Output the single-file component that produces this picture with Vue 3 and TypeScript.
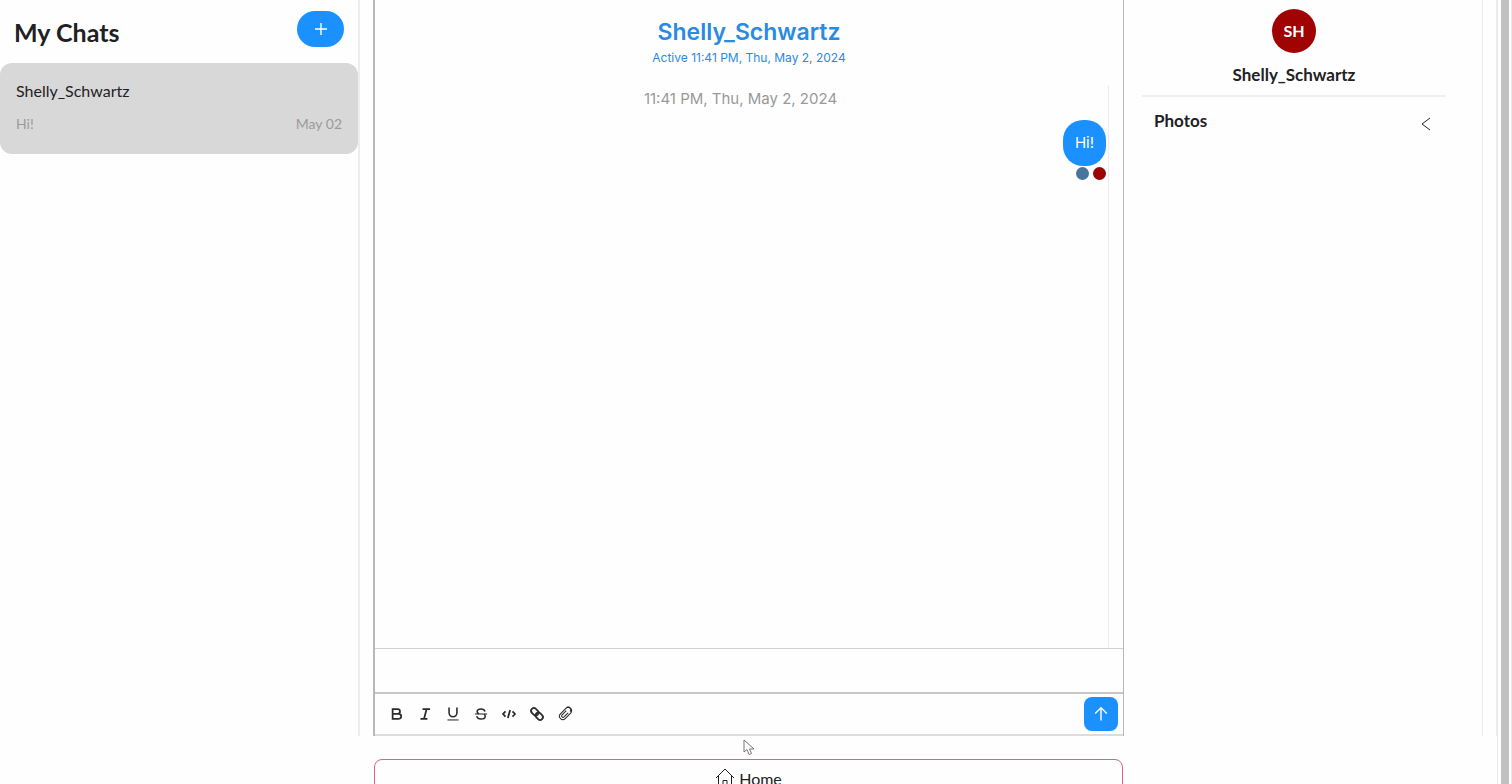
<script setup lang="ts">
import { ref } from 'vue'

interface Chat {
  name: string
  preview: string
  date: string
}

const chats: Chat[] = [{ name: 'Shelly_Schwartz', preview: 'Hi!', date: 'May 02' }]
const draft = ref('')
const photosOpen = ref(false)
</script>

<template>
  <div class="page">
    <div class="content">
      <main class="workspace">
        <aside class="chats">
          <header class="chats-head">
            <h1>My Chats</h1>
            <button class="new-chat" type="button" aria-label="New chat">
              <svg width="14" height="14" viewBox="0 0 14 14"><path d="M7 1v12M1 7h12" /></svg>
            </button>
          </header>
          <button v-for="chat in chats" :key="chat.name" class="chat-card" type="button">
            <span class="chat-name">{{ chat.name }}</span>
            <span class="chat-meta">
              <span>{{ chat.preview }}</span>
              <span>{{ chat.date }}</span>
            </span>
          </button>
        </aside>

        <section class="conversation">
          <header class="conv-head">
            <h2>Shelly_Schwartz</h2>
            <p>Active 11:41 PM, Thu, May 2, 2024</p>
          </header>
          <div class="feed">
            <time class="stamp">11:41 PM, Thu, May 2, 2024</time>
            <div class="bubble">Hi!</div>
            <div class="receipts">
              <span class="dot dot-blue"></span>
              <span class="dot dot-red"></span>
            </div>
          </div>
          <form class="composer" @submit.prevent="draft = ''">
            <textarea v-model="draft" aria-label="Message"></textarea>
            <div class="toolbar">
              <div class="tools">
                <button type="button" aria-label="Bold">
                  <svg viewBox="0 0 16 16"><path class="bold" d="M3 2.500h5.700a2.700 2.700 0 0 1 0 5.400H3zM3 7.900h7a2.800 2.800 0 0 1 0 5.600H3z" /></svg>
                </button>
                <button type="button" aria-label="Italic">
                  <svg viewBox="0 0 16 16"><path class="bold" d="M5.200 2.500h8.600M2.800 13.500h8M9.800 2.500l-2.900 11" /></svg>
                </button>
                <button type="button" aria-label="Underline">
                  <svg viewBox="0 0 16 16"><path class="medium" d="M3.500 .5v6.200a4.500 4.500 0 0 0 9 0V.5" /><path class="thin" d="M1.700 14.800h12.600" /></svg>
                </button>
                <button type="button" aria-label="Strikethrough">
                  <svg viewBox="0 0 16 16"><path class="medium" d="M12.600 5.200C12.100 3.300 10.500 2.200 8 2.200c-2.600 0-4.400 1.200-4.400 3.100 0 1.200.8 2 2 2.500M3.200 10.500c.4 2 2.100 3.300 4.900 3.300s4.700-1.300 4.700-3.200c0-1-.4-1.800-1.300-2.400" /><path class="thin" d="M1 8h14" /></svg>
                </button>
                <button type="button" aria-label="Code">
                  <svg viewBox="0 0 16 16"><path class="bold" d="M4 5L1.200 8 4 11M12 5l2.800 3-2.800 3" /><path class="bold" d="M9.300 3.400l-2.600 9.200" /></svg>
                </button>
                <button type="button" aria-label="Link">
                  <svg viewBox="0 0 16 16"><g transform="rotate(45 8 8)"><rect class="bold" x="-.2" y="4.800" width="9.200" height="6.400" rx="3.200" /><rect class="bold" x="7" y="4.800" width="9.200" height="6.400" rx="3.200" /></g></svg>
                </button>
                <button type="button" aria-label="Attach file">
                  <svg viewBox="0 0 16 16"><g transform="rotate(45 8 8)"><path class="thin" d="M11.800 3.500v8a3.800 3.800 0 0 1-7.600 0V2.500a3 3 0 0 1 6 -.6M11.800 3.500V2.600a3.800 3.800 0 0 0-7.600 0M9.600 4.500v6.700a1.600 1.600 0 0 1-3.200 0V4.300" /></g></svg>
                </button>
              </div>
              <button class="send" type="submit" aria-label="Send">
                <svg width="16" height="16" viewBox="0 0 16 16"><path d="M8 14.500V2M2.200 7.500L8 1.700l5.800 5.800" /></svg>
              </button>
            </div>
          </form>
        </section>

        <aside class="details">
          <div class="details-body">
            <div class="avatar">SH</div>
            <h3>Shelly_Schwartz</h3>
            <div class="photos">
              <h3>Photos</h3>
              <button type="button" aria-label="Toggle photos" :aria-expanded="photosOpen" @click="photosOpen = !photosOpen">
                <svg width="12" height="16" viewBox="0 0 12 16"><path d="M10 2L2 8l8 6" /></svg>
              </button>
            </div>
          </div>
        </aside>
      </main>

      <a class="home" href="#">
        <svg width="20" height="20" viewBox="0 0 20 20"><path d="M1 11L10 2l9 9M3.500 9v10H8v-5.500h4V19h4.500V9" /></svg>
        <span>Home</span>
      </a>
    </div>
    <div class="scroll-track"><div class="scroll-thumb"></div></div>

    <svg class="pointer" width="12" height="17" viewBox="0 0 12 17"><path d="M1 1v12l3-2.500 2 5 2.500-1-2-4.500H11z" /></svg>
  </div>
</template>

<style>
body {
  margin: 0;
  background: #fefefe;
}
</style>

<style scoped>
* {
  box-sizing: border-box;
}
h1, h2, h3, p {
  margin: 0;
}
button {
  font: inherit;
  color: inherit;
  border: 0;
  padding: 0;
  background: none;
  cursor: pointer;
}
svg {
  display: block;
  fill: none;
  stroke: currentColor;
}
.page {
  position: relative;
  display: flex;
  height: 100vh;
  overflow: hidden;
  background: #fefefe;
  color: #1f2124;
  font-family: Lato, "Liberation Sans", sans-serif;
}
.content {
  flex: 1;
  min-width: 0;
  border-right: 1px solid #e9e9e9;
}
.workspace {
  display: grid;
  grid-template-columns: 360px minmax(0, 1fr) 373px;
  height: calc(100vh - 48px);
}
.chats {
  border-right: 2px solid #ededed;
}
.chats-head {
  display: flex;
  justify-content: space-between;
  align-items: flex-start;
  height: 63px;
  padding: 11px 14px 0;
}
h1 {
  font-size: 25px;
  line-height: 42px;
  font-weight: 700;
}
.new-chat {
  display: grid;
  place-items: center;
  width: 47px;
  height: 36px;
  border-radius: 18px;
  background: #1b90ff;
  color: #fff;
}
.chat-card {
  display: flex;
  flex-direction: column;
  justify-content: space-between;
  width: 100%;
  height: 91px;
  padding: 16px 16px 18px;
  border-radius: 12px;
  background: #d8d8d8;
  text-align: left;
}
.chat-name {
  font-size: 16px;
  line-height: 24px;
}
.chat-meta {
  display: flex;
  justify-content: space-between;
  font-size: 14px;
  line-height: 24px;
  color: #9b9b9b;
}
.conversation {
  display: flex;
  flex-direction: column;
  margin-left: 13px;
  border: solid #b8b8b8;
  border-width: 0 1px 0 2px;
  font-family: Inter, "Liberation Sans", sans-serif;
}
.conv-head {
  height: 85px;
  padding-top: 16px;
  text-align: center;
  color: #2b8ae2;
}
h2 {
  font-size: 23px;
  line-height: 32px;
  font-weight: 600;
}
.conv-head p {
  font-size: 12px;
  line-height: 20px;
}
.feed {
  flex: 1;
  display: flex;
  flex-direction: column;
  align-items: flex-end;
  margin-right: 14px;
  padding: 3px 2px 0 0;
  border-right: 1px solid #ececec;
}
.stamp {
  align-self: center;
  font-size: 15px;
  line-height: 22px;
  color: #999;
}
.bubble {
  margin-top: 10px;
  padding: 12px;
  border-radius: 20px;
  background: #1b90ff;
  color: #fff;
  font-size: 15px;
  line-height: 22px;
}
.receipts {
  display: flex;
  gap: 4px;
  margin-top: 1px;
}
.dot {
  width: 13px;
  height: 13px;
  border-radius: 50%;
}
.dot-blue {
  background: #49749c;
}
.dot-red {
  background: #9c0303;
}
.composer {
  border-top: 1px solid #cfcfcf;
  border-bottom: 2px solid #dcdcdc;
}
textarea {
  display: block;
  width: 100%;
  height: 43px;
  padding: 10px 12px;
  border: 0;
  outline: 0;
  resize: none;
  background: transparent;
  font: inherit;
}
.toolbar {
  display: flex;
  justify-content: space-between;
  align-items: center;
  height: 42px;
  padding: 0 5px 0 8px;
  border-top: 2px solid #c6c6c6;
}
.tools {
  display: flex;
  color: #2b2b2b;
}
.tools button {
  display: grid;
  place-items: center;
  width: 28px;
  height: 28px;
}
.tools svg {
  width: 14px;
  height: 14px;
  overflow: visible;
}
.bold {
  stroke-width: 2;
}
.medium {
  stroke-width: 1.8;
}
.thin {
  stroke-width: 1.2;
}
.send {
  display: grid;
  place-items: center;
  width: 34px;
  height: 34px;
  border-radius: 8px;
  background: #1b90ff;
  color: #fff;
}
.send svg,
.new-chat svg {
  stroke-width: 1.4;
}
.details {
  padding-right: 13px;
  border-right: 1px solid #ececec;
}
.details-body {
  display: flex;
  flex-direction: column;
  align-items: center;
  height: 100%;
  padding: 9px 36px 0 18px;
  border-right: 1px solid #ececec;
}
.avatar {
  width: 44px;
  height: 44px;
  border-radius: 50%;
  background: #9f0303;
  color: #fff;
  font-size: 16px;
  line-height: 44px;
  font-weight: 700;
  text-align: center;
}
h3 {
  font-size: 17px;
  line-height: 24px;
  font-weight: 700;
}
.details-body > h3 {
  margin-top: 10px;
}
.photos {
  display: flex;
  justify-content: space-between;
  align-items: flex-start;
  width: 100%;
  margin-top: 8px;
  padding: 12px 14px 0 12px;
  border-top: 2px solid #f0f0f0;
}
.photos button {
  margin-top: 7px;
}
.home {
  display: flex;
  justify-content: center;
  gap: 4px;
  height: 48px;
  margin: 23px 374px 0;
  padding-top: 7px;
  border: 1px solid #d9667f;
  border-radius: 8px;
  color: #222;
  font-size: 16px;
  line-height: 24px;
  text-decoration: none;
}
.scroll-track {
  width: 14px;
  padding: 0 2px 0 3px;
  border-right: 1px solid #e8e8e8;
}
.scroll-thumb {
  height: 100%;
  background: #c1c1c1;
}
.pointer {
  position: absolute;
  top: 739px;
  left: 743px;
  fill: #fff;
  stroke: #777;
}
</style>
